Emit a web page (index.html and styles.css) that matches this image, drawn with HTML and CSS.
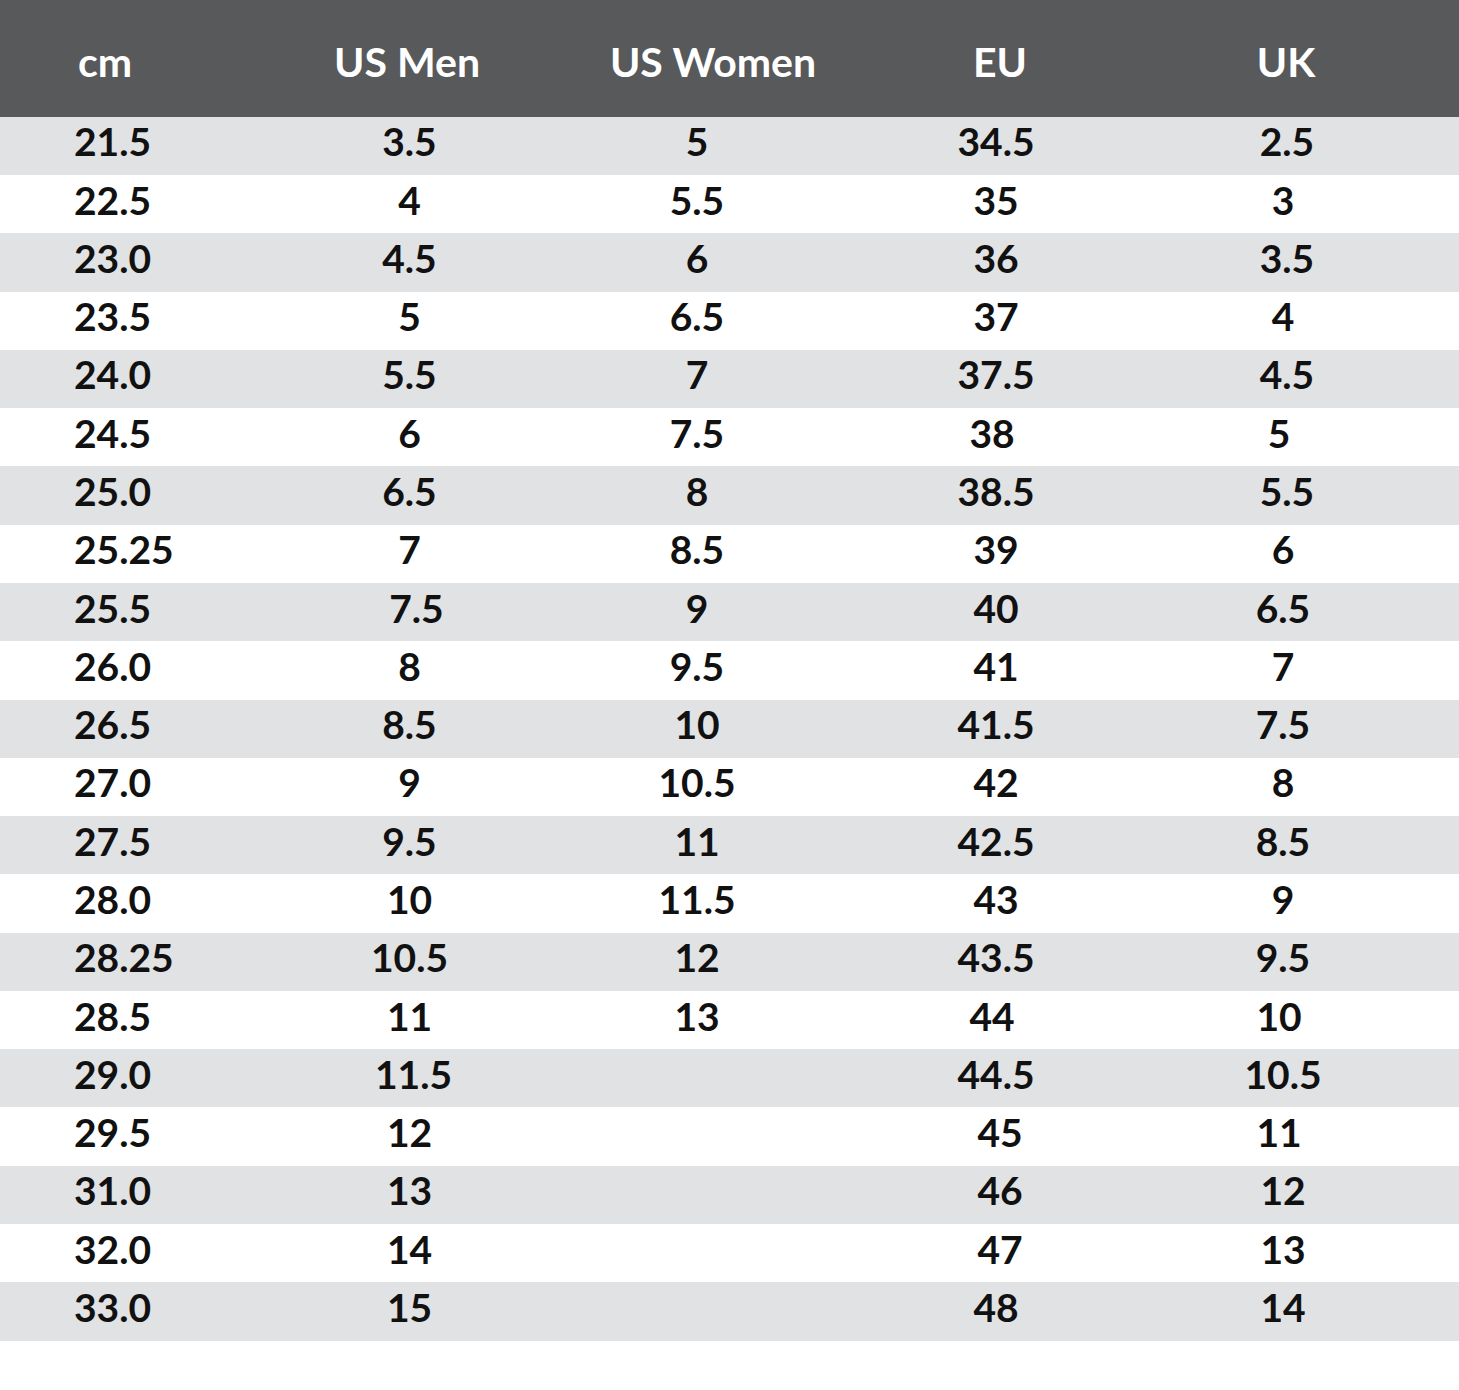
FILE: index.html
```html
<!DOCTYPE html>
<html>
<head>
<meta charset="utf-8">
<link rel="stylesheet" href="styles.css">
</head>
<body>
<div class="chart">
  <div class="row head">
    <div class="cell first">cm</div>
    <div class="cell shift-m">US Men</div>
    <div class="cell shift-w">US Women</div>
    <div class="cell shift-eu">EU</div>
    <div class="cell shift-uk">UK</div>
  </div>
  <div class="row alt"><div class="cell first">21.5</div><div class="cell">3.5</div><div class="cell">5</div><div class="cell">34.5</div><div class="cell r">2.5</div></div>
  <div class="row"><div class="cell first">22.5</div><div class="cell">4</div><div class="cell">5.5</div><div class="cell">35</div><div class="cell">3</div></div>
  <div class="row alt"><div class="cell first">23.0</div><div class="cell">4.5</div><div class="cell">6</div><div class="cell">36</div><div class="cell r">3.5</div></div>
  <div class="row"><div class="cell first">23.5</div><div class="cell">5</div><div class="cell">6.5</div><div class="cell">37</div><div class="cell">4</div></div>
  <div class="row alt"><div class="cell first">24.0</div><div class="cell">5.5</div><div class="cell">7</div><div class="cell">37.5</div><div class="cell r">4.5</div></div>
  <div class="row"><div class="cell first">24.5</div><div class="cell">6</div><div class="cell">7.5</div><div class="cell l">38</div><div class="cell l">5</div></div>
  <div class="row alt"><div class="cell first">25.0</div><div class="cell">6.5</div><div class="cell">8</div><div class="cell">38.5</div><div class="cell r">5.5</div></div>
  <div class="row"><div class="cell first">25.25</div><div class="cell">7</div><div class="cell">8.5</div><div class="cell">39</div><div class="cell">6</div></div>
  <div class="row alt"><div class="cell first">25.5</div><div class="cell rr">7.5</div><div class="cell">9</div><div class="cell">40</div><div class="cell">6.5</div></div>
  <div class="row"><div class="cell first">26.0</div><div class="cell">8</div><div class="cell">9.5</div><div class="cell">41</div><div class="cell">7</div></div>
  <div class="row alt"><div class="cell first">26.5</div><div class="cell">8.5</div><div class="cell">10</div><div class="cell">41.5</div><div class="cell">7.5</div></div>
  <div class="row"><div class="cell first">27.0</div><div class="cell">9</div><div class="cell">10.5</div><div class="cell">42</div><div class="cell">8</div></div>
  <div class="row alt"><div class="cell first">27.5</div><div class="cell">9.5</div><div class="cell">11</div><div class="cell">42.5</div><div class="cell">8.5</div></div>
  <div class="row"><div class="cell first">28.0</div><div class="cell">10</div><div class="cell">11.5</div><div class="cell">43</div><div class="cell">9</div></div>
  <div class="row alt"><div class="cell first">28.25</div><div class="cell">10.5</div><div class="cell">12</div><div class="cell">43.5</div><div class="cell">9.5</div></div>
  <div class="row"><div class="cell first">28.5</div><div class="cell">11</div><div class="cell">13</div><div class="cell l">44</div><div class="cell l">10</div></div>
  <div class="row alt"><div class="cell first">29.0</div><div class="cell r">11.5</div><div class="cell"></div><div class="cell">44.5</div><div class="cell">10.5</div></div>
  <div class="row"><div class="cell first">29.5</div><div class="cell">12</div><div class="cell"></div><div class="cell r">45</div><div class="cell l">11</div></div>
  <div class="row alt"><div class="cell first">31.0</div><div class="cell">13</div><div class="cell"></div><div class="cell r">46</div><div class="cell">12</div></div>
  <div class="row"><div class="cell first">32.0</div><div class="cell">14</div><div class="cell"></div><div class="cell r">47</div><div class="cell">13</div></div>
  <div class="row alt"><div class="cell first">33.0</div><div class="cell">15</div><div class="cell"></div><div class="cell">48</div><div class="cell">14</div></div>
</div>
</body>
</html>
```
FILE: styles.css
```css
html, body {
  margin: 0;
  padding: 0;
  background: #ffffff;
}
body {
  width: 1459px;
  font-family: "Lato", "Noto Sans", sans-serif;
  font-weight: 700;
  color: #111111;
}
.chart {
  display: flex;
  flex-direction: column;
}
.row {
  display: grid;
  grid-template-columns: 260px 299px 276px 322px 252px 1fr;
  height: 58.29px;
  font-size: 39px;
  line-height: 1;
  padding-bottom: 8px;
  box-sizing: border-box;
  background: #ffffff;
}
.row.alt {
  background: #e1e2e4;
}
.row.head {
  height: 116.7px;
  background: #58595b;
  color: #ffffff;
  font-size: 41px;
  padding-bottom: 0;
  padding-top: 6px;
}
.cell {
  display: flex;
  align-items: center;
  justify-content: center;
  white-space: nowrap;
}
.cell.first {
  justify-content: flex-start;
  padding-left: 74px;
}
.cell.r {
  padding-left: 8px;
}
.cell.rr {
  padding-left: 14px;
}
.cell.l {
  padding-right: 8px;
}
.head .cell.first {
  padding-left: 78px;
}
.head .shift-m {
  padding-right: 5px;
}
.head .shift-w {
  padding-left: 32px;
}
.head .shift-eu {
  padding-left: 8px;
}
.head .shift-uk {
  padding-left: 6px;
}
```
